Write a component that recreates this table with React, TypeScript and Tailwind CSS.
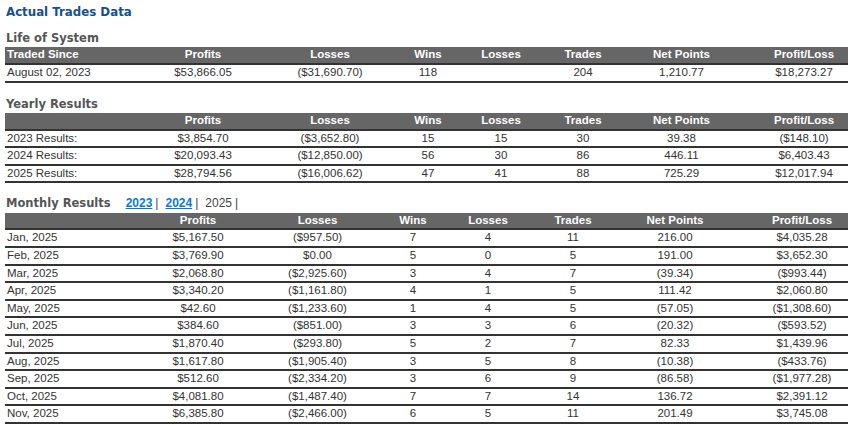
import React from 'react'

type Row = string[]

const sectionFont = "font-['DejaVu_Sans',Verdana,sans-serif]"

const lifeRows: Row[] = [
  ['August 02, 2023', '$53,866.05', '($31,690.70)', '118', '', '204', '1,210.77', '$18,273.27'],
]

const yearlyRows: Row[] = [
  ['2023 Results:', '$3,854.70', '($3,652.80)', '15', '15', '30', '39.38', '($148.10)'],
  ['2024 Results:', '$20,093.43', '($12,850.00)', '56', '30', '86', '446.11', '$6,403.43'],
  ['2025 Results:', '$28,794.56', '($16,006.62)', '47', '41', '88', '725.29', '$12,017.94'],
]

const monthlyRows: Row[] = [
  ['Jan, 2025', '$5,167.50', '($957.50)', '7', '4', '11', '216.00', '$4,035.28'],
  ['Feb, 2025', '$3,769.90', '$0.00', '5', '0', '5', '191.00', '$3,652.30'],
  ['Mar, 2025', '$2,068.80', '($2,925.60)', '3', '4', '7', '(39.34)', '($993.44)'],
  ['Apr, 2025', '$3,340.20', '($1,161.80)', '4', '1', '5', '111.42', '$2,060.80'],
  ['May, 2025', '$42.60', '($1,233.60)', '1', '4', '5', '(57.05)', '($1,308.60)'],
  ['Jun, 2025', '$384.60', '($851.00)', '3', '3', '6', '(20.32)', '($593.52)'],
  ['Jul, 2025', '$1,870.40', '($293.80)', '5', '2', '7', '82.33', '$1,439.96'],
  ['Aug, 2025', '$1,617.80', '($1,905.40)', '3', '5', '8', '(10.38)', '($433.76)'],
  ['Sep, 2025', '$512.60', '($2,334.20)', '3', '6', '9', '(86.58)', '($1,977.28)'],
  ['Oct, 2025', '$4,081.80', '($1,487.40)', '7', '7', '14', '136.72', '$2,391.12'],
  ['Nov, 2025', '$6,385.80', '($2,466.00)', '6', '5', '11', '201.49', '$3,745.08'],
]

const headers = ['Profits', 'Losses', 'Wins', 'Losses', 'Trades', 'Net Points', 'Profit/Loss']

// column centres differ a little between the top two tables and the monthly one
const wideCols = 'grid-cols-[135px_126px_128px_68px_78px_86px_111px_111px]'
const monthCols = 'grid-cols-[135px_116px_123px_68px_82px_88px_116px_115px]'

function DataTable({ first, rows, cols }: { first: string; rows: Row[]; cols: string }) {
  const cell = (i: number) =>
    i === 0
      ? 'flex items-center justify-start pl-[2px] whitespace-nowrap'
      : i === 7
        ? 'flex items-center justify-center pl-[23px] whitespace-nowrap'
        : 'flex items-center justify-center whitespace-nowrap'

  return (
    <div className="w-[843px] font-['Liberation_Sans',Arial,sans-serif] text-[11.5px] leading-none">
      <div className={`grid ${cols} h-[17.6px] bg-[#666666] border-b-2 border-[#333333] text-white font-bold`}>
        {[first, ...headers].map((h, i) => (
          <div key={i} className={cell(i)}>{h}</div>
        ))}
      </div>
      {rows.map((r, ri) => (
        <div key={ri} className={`grid ${cols} h-[17.6px] border-b-2 border-[#333333] text-[#333333]`}>
          {r.map((v, i) => (
            <div key={i} className={cell(i)}>{v}</div>
          ))}
        </div>
      ))}
    </div>
  )
}

function SectionTitle({ children }: { children: React.ReactNode }) {
  return (
    <div className={`${sectionFont} text-[11.5px] font-bold text-[#555555] leading-[13.4px] mb-[2px] pl-[1px]`}>
      {children}
    </div>
  )
}

export default function App() {
  return (
    <div className="w-[850px] h-[442px] bg-white px-[5px] pt-[5px] overflow-hidden">
      <h1 className={`${sectionFont} text-[11.8px] font-bold text-[#15508f] leading-[14px] pl-[1px]`}>
        Actual Trades Data
      </h1>

      <div className="mt-[13px]">
        <SectionTitle>Life of System</SectionTitle>
        <DataTable first="Traded Since" rows={lifeRows} cols={wideCols} />
      </div>

      <div className="mt-[15px]">
        <SectionTitle>Yearly Results</SectionTitle>
        <DataTable first="" rows={yearlyRows} cols={wideCols} />
      </div>

      <div className="mt-[14px]">
        <div className="flex items-baseline mb-[2px] h-[13.4px]">
          <span className={`${sectionFont} text-[11.5px] font-bold text-[#555555] leading-[13.4px] pl-[1px]`}>
            Monthly Results
          </span>
          <span className="ml-[15px] font-['Liberation_Sans',Arial,sans-serif] text-[12px] leading-[13.4px] text-[#444444]">
            <a href="#" className="font-bold text-[#0a78d2] underline">2023</a>
            <span className="ml-[3px] mr-[7px]">|</span>
            <a href="#" className="font-bold text-[#0a78d2] underline">2024</a>
            <span className="ml-[3px] mr-[7px]">|</span>
            <span>2025</span>
            <span className="ml-[3px]">|</span>
          </span>
        </div>
        <DataTable first="" rows={monthlyRows} cols={monthCols} />
      </div>
    </div>
  )
}
